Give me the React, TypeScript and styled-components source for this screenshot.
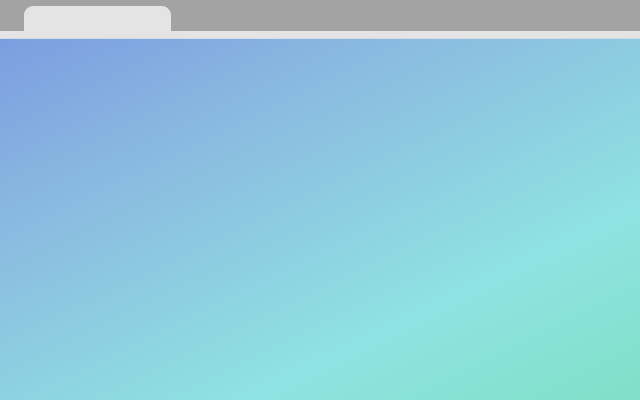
import React from "react";
import styled, { createGlobalStyle } from "styled-components";

const Global = createGlobalStyle`
  html, body { margin: 0; padding: 0; width: 640px; height: 400px; overflow: hidden; }
  #root { width: 640px; height: 400px; }
`;

const Frame = styled.div`
  width: 640px;
  height: 400px;
  display: flex;
  flex-direction: column;
`;

const TabBar = styled.div`
  height: 31px;
  background: #a3a3a3;
  display: flex;
  align-items: flex-end;
  padding-left: 24px;
  flex-shrink: 0;
`;

const Tab = styled.div`
  width: 147px;
  height: 25px;
  background: #e4e4e4;
  border-radius: 9px 9px 0 0;
`;

const Strip = styled.div`
  height: 8px;
  background: #e4e4e4;
  border-bottom: 1px solid #d4dbe6;
  box-sizing: border-box;
  flex-shrink: 0;
`;

const Content = styled.div`
  flex: 1;
  background: linear-gradient(154deg, #7c9de0 0%, #8bbde0 32%, #8fe2e2 71%, #80e0c7 100%);
`;

export default function App() {
  return (
    <>
      <Global />
      <Frame>
        <TabBar>
          <Tab />
        </TabBar>
        <Strip />
        <Content />
      </Frame>
    </>
  );
}
